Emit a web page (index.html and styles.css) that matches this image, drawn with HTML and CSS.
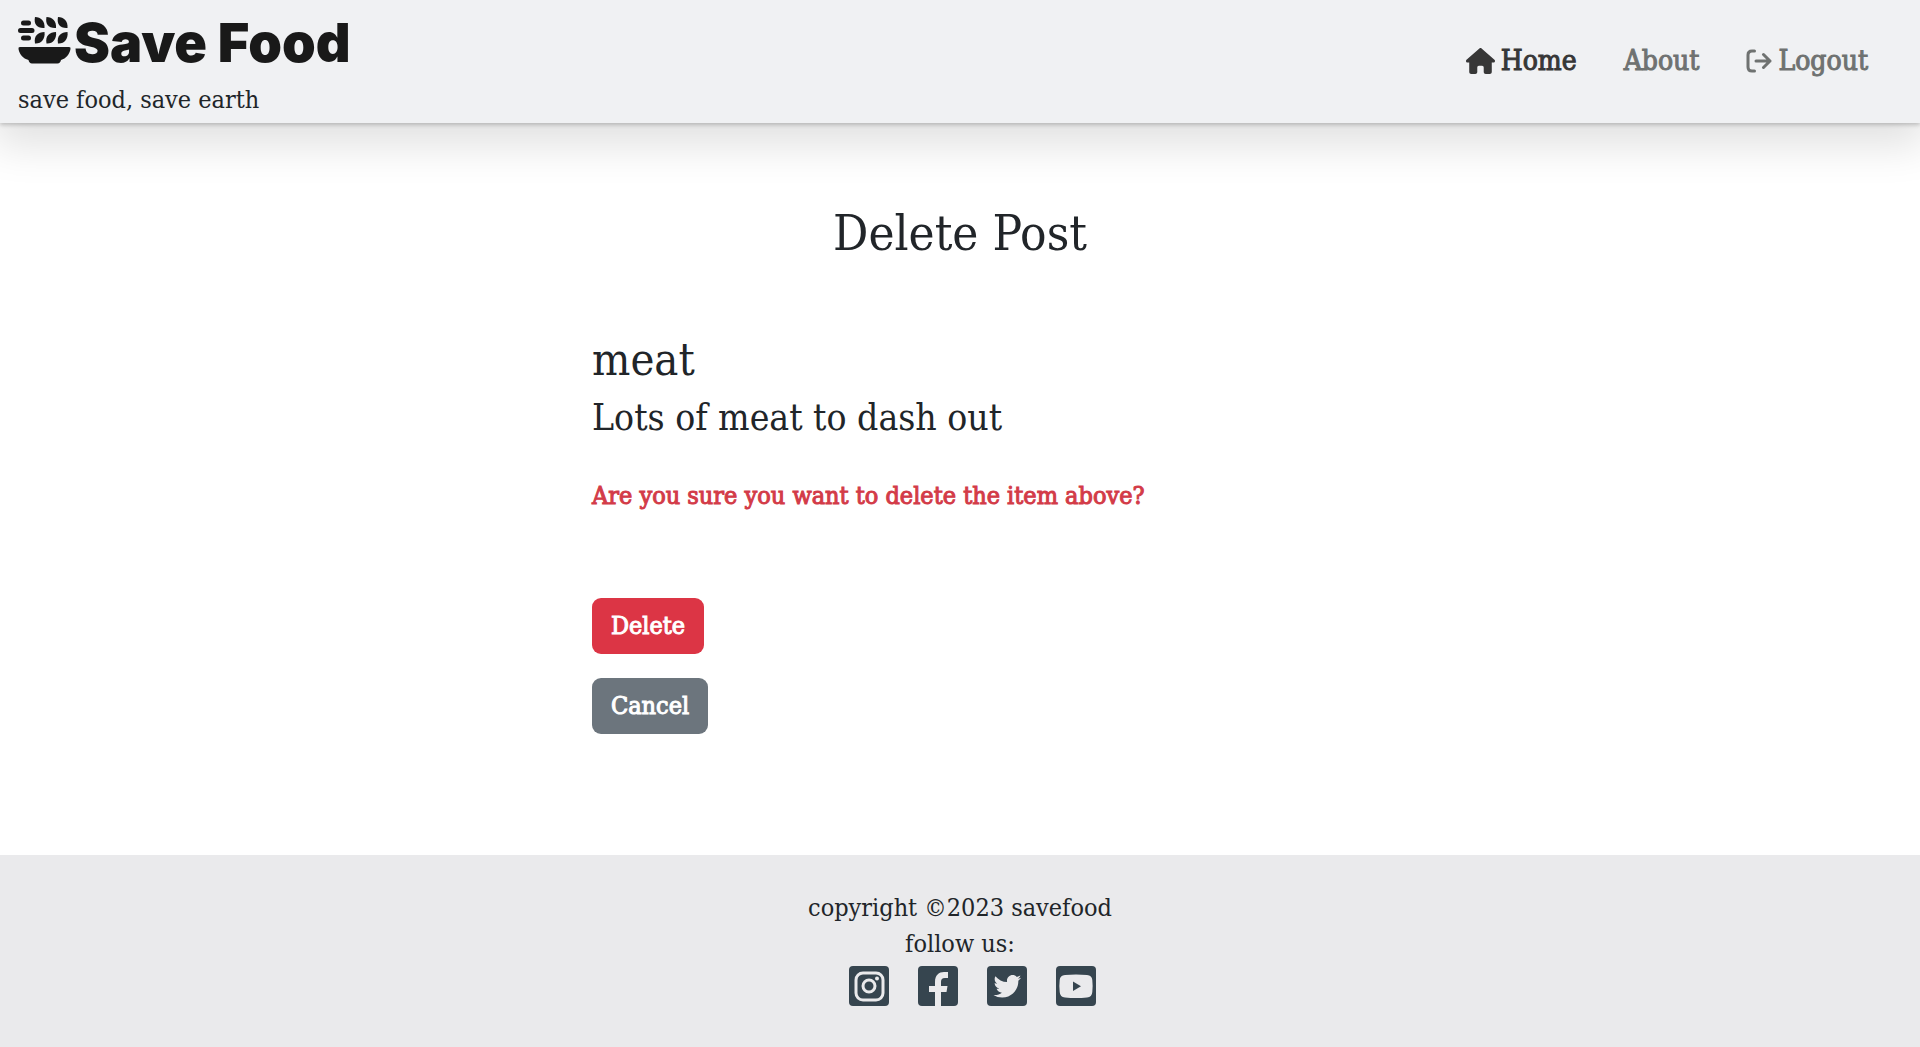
FILE: index.html
```html
<!DOCTYPE html>
<html lang="en">
<head>
<meta charset="utf-8">
<meta name="viewport" content="width=device-width, initial-scale=1">
<title>Save Food - Delete Post</title>
<link rel="stylesheet" href="styles.css">
</head>
<body>
<header class="site-header">
  <div class="brand">
    <a class="logo" href="#">
      <svg class="logo-icon" viewBox="0 0 53 47" aria-hidden="true">
        <g stroke="currentColor" stroke-width="5" stroke-linecap="round">
          <path d="M5.500 6H10.500M2.500 13.500H14M5.500 21H10.500"/>
        </g>
        <g fill="currentColor">
          <path id="leaf-down" d="M17 0C23 0 27 4 26.500 11C19 11.500 15.500 7 17 0Z"/>
          <use href="#leaf-down" x="11.500"/>
          <use href="#leaf-down" x="23"/>
          <path id="leaf-up" d="M26.500 15C27.500 22 23 27 17 26.500C15.500 19 20 15 26.500 15Z"/>
          <use href="#leaf-up" x="11.500"/>
          <use href="#leaf-up" x="23"/>
          <path d="M2 30H51Q53 30 52.500 32C51.500 37.500 48 41.500 43 43C42.500 45 41.500 46.500 39.500 46.500H14C12 46.500 11 45 10.500 43C5 41.500 1.500 37.500.5 32Q0 30 2 30Z"/>
        </g>
      </svg>
      <span class="logo-name">Save Food</span>
    </a>
    <p class="tagline">save food, save earth</p>
  </div>
  <nav class="main-nav">
    <a class="nav-link active" href="#">
      <svg class="nav-icon home-icon" viewBox="0 0 576 512" fill="currentColor" aria-hidden="true"><path d="M575.8 255.500c0 18-15 32.100-32 32.100h-32l.7 160.200c0 2.700-.2 5.400-.5 8.100V472c0 22.100-17.900 40-40 40H392c-22.100 0-40-17.900-40-40V384c0-17.700-14.300-32-32-32H256c-17.700 0-32 14.300-32 32v88c0 22.100-17.900 40-40 40H104c-22.100 0-40-17.900-40-40V287.600H32c-18 0-32-14-32-32.100c0-9 3-17 10-24L266.400 8c7-7 15-8 22-8s15 2 21 7L564.800 231.500c8 7 12 15 11 24z"/></svg>
      Home</a>
    <a class="nav-link" href="#">About</a>
    <a class="nav-link" href="#">
      <svg class="nav-icon" viewBox="0 0 26 24" fill="none" stroke="currentColor" stroke-width="3" stroke-linecap="round" stroke-linejoin="round" aria-hidden="true"><path d="M8.500 2H6Q2 2 2 6V18Q2 22 6 22H8.500M10 12H24M17.500 5.500L24 12L17.500 18.500"/></svg>
      Logout</a>
  </nav>
</header>
<main class="content">
  <h1 class="page-title">Delete Post</h1>
  <section class="post">
    <h2 class="post-title">meat</h2>
    <h3 class="post-text">Lots of meat to dash out</h3>
    <p class="warning">Are you sure you want to delete the item above?</p>
    <form class="actions">
      <button class="btn btn-danger" type="submit">Delete</button>
      <button class="btn btn-secondary" type="button">Cancel</button>
    </form>
  </section>
</main>
<footer class="site-footer">
  <p>copyright ©2023 savefood</p>
  <p>follow us:</p>
  <div class="socials">
    <a href="#" aria-label="Instagram"><svg viewBox="0 0 40 40"><rect class="tile" width="40" height="40" rx="4"/><rect class="line" x="7" y="7" width="27" height="27" rx="7"/><circle class="line" cx="20" cy="20" r="6"/><circle class="shape" cx="28" cy="12.500" r="2"/></svg></a>
    <a href="#" aria-label="Facebook"><svg viewBox="0 0 40 40"><rect class="tile" width="40" height="40" rx="4"/><path class="shape" d="M17 40V26H11V20H17V16C17 9 21 6 26 6H30V12H27C24 12 23 13.500 23 16V20H29.500L28.500 26H23V40Z"/></svg></a>
    <a href="#" aria-label="Twitter"><svg viewBox="0 0 40 40"><rect class="tile" width="40" height="40" rx="4"/><path class="shape" transform="translate(6.500 6.500) scale(.054)" d="M459.370 151.716c.325 4.548.325 9.097.325 13.645 0 138.720-105.583 298.558-298.558 298.558-59.452 0-114.680-17.219-161.137-47.106 8.447.974 16.568 1.299 25.340 1.299 49.055 0 94.213-16.568 130.274-44.832-46.132-.975-84.792-31.188-98.112-72.772 6.498.974 12.995 1.624 19.818 1.624 9.421 0 18.843-1.300 27.614-3.573-48.081-9.747-84.143-51.980-84.143-102.985v-1.299c13.969 7.797 30.214 12.670 47.431 13.319-28.264-18.843-46.781-51.005-46.781-87.391 0-19.492 5.197-37.360 14.294-52.954 51.655 63.675 129.300 105.258 216.365 109.807-1.624-7.797-2.599-15.918-2.599-24.040 0-57.828 46.782-104.934 104.934-104.934 30.213 0 57.502 12.670 76.670 33.137 23.715-4.548 46.456-13.320 66.599-25.340-7.798 24.366-24.366 44.833-46.132 57.827 21.117-2.273 41.584-8.122 60.426-16.243-14.292 20.791-32.161 39.308-52.628 54.253z"/></svg></a>
    <a href="#" aria-label="YouTube"><svg viewBox="0 0 40 40"><rect class="tile" width="40" height="40" rx="4"/><path class="shape" d="M9 9Q20 8 31 9Q36 9.500 36.300 14Q37 20 36.300 26Q36 31 31 31.500Q20 32.500 9 31.500Q4 31 3.700 26Q3 20 3.700 14Q4 9.500 9 9Z"/><path class="tile" d="M17 15.500L25 20.200L17 25Z"/></svg></a>
  </div>
</footer>
</body>
</html>
```
FILE: styles.css
```css
* { box-sizing: border-box; }

body {
  margin: 0;
  min-height: 100vh;
  display: flex;
  flex-direction: column;
  font-family: "DejaVu Serif Condensed", "DejaVu Serif", serif;
  font-size: 25px;
  line-height: 36px;
  color: #212529;
  background: #fff;
}

h1, h2, h3, p { margin: 0; font-weight: 400; }
a { color: inherit; text-decoration: none; }
svg { display: block; }

.site-header {
  display: flex;
  justify-content: space-between;
  align-items: center;
  padding: 8px 52px 5px 18px;
  background: #f0f1f3;
  box-shadow: 0 2px 4px rgba(0, 0, 0, .2), 0 16px 40px 6px rgba(0, 0, 0, .12);
}

.logo {
  display: flex;
  align-items: center;
  gap: 3px;
  height: 64px;
  font: 900 54px/64px Inter, sans-serif;
  color: #191919;
}
.logo-icon { width: 53px; height: 47px; }
.logo-name { padding-top: 6px; }
.tagline { margin-top: 10px; }

.main-nav { display: flex; gap: 47px; padding-bottom: 4px; color: #6f7271; }
.nav-link {
  display: flex;
  align-items: center;
  gap: 6px;
  font-size: 28px;
  -webkit-text-stroke: 1px currentColor;
}
.nav-link.active { color: #373737; }
.nav-icon { width: 26px; height: 24px; }
.home-icon { width: 29px; height: 26px; }

.content { flex: 1; padding: 81px 24px; }
.page-title { font-size: 49px; line-height: 60px; text-align: center; }
.post { max-width: 736px; margin: 70px auto 0; }
.post-title { font-size: 45px; line-height: 52px; }
.post-text { margin-top: 8px; font-size: 37px; line-height: 48px; }
.warning {
  margin-top: 36px;
  color: #d33b48;
  -webkit-text-stroke: 1px currentColor;
}
.actions {
  display: flex;
  flex-direction: column;
  align-items: flex-start;
  gap: 24px;
  margin-top: 84px;
}
.btn {
  height: 56px;
  padding: 0 19px;
  border: 0;
  border-radius: 9px;
  font: inherit;
  color: #fff;
  -webkit-text-stroke: 1px currentColor;
}
.btn-danger { background: #dc3545; }
.btn-secondary { background: #6c757d; }

.site-footer {
  padding: 35px 24px 41px;
  background: #eaeaec;
  text-align: center;
}
.socials { display: flex; justify-content: center; gap: 29px; margin: 4px 0 0 24px; }
.socials svg { width: 40px; height: 40px; }
.tile { fill: #36454f; }
.shape { fill: #eaeaec; }
.line { fill: none; stroke: #eaeaec; stroke-width: 3px; }
```
